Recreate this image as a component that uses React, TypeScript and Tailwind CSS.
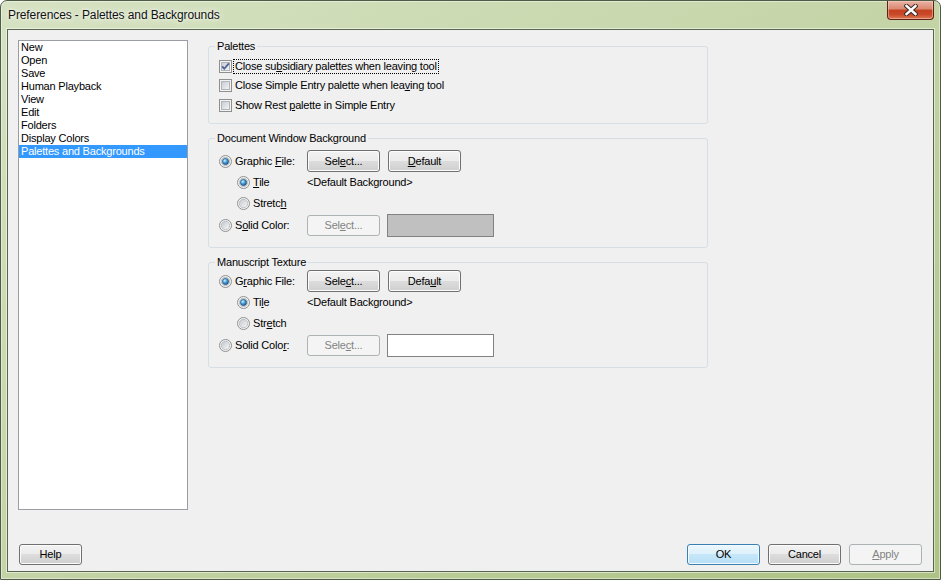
import React from "react";

const ITEMS = [
  "New",
  "Open",
  "Save",
  "Human Playback",
  "View",
  "Edit",
  "Folders",
  "Display Colors",
  "Palettes and Backgrounds",
];

// Underlines the mnemonic letter at index i
function Mn({ t, i }: { t: string; i?: number }) {
  if (i === undefined) return <>{t}</>;
  return (
    <>
      {t.slice(0, i)}
      <u className="underline underline-offset-[1px]">{t[i]}</u>
      {t.slice(i + 1)}
    </>
  );
}

function CheckBox({ checked }: { checked?: boolean }) {
  return (
    <svg width="13" height="13" viewBox="0 0 13 13" className="shrink-0">
      <defs>
        <linearGradient id="cbg" x1="0" y1="0" x2="1" y2="1">
          <stop offset="0" stopColor="#c6cbd1" />
          <stop offset="1" stopColor="#f6f6f6" />
        </linearGradient>
      </defs>
      <rect x="0.5" y="0.5" width="12" height="12" fill="#f4f4f4" stroke="#8e8f8f" />
      <rect x="2.5" y="2.5" width="8" height="8" fill="url(#cbg)" stroke="#b0b5ba" />
      {checked && (
        <path d="M3.2 6.4 L5.3 8.8 L9.9 3.4" fill="none" stroke="#4a5f97" strokeWidth="1.7" />
      )}
    </svg>
  );
}

function Radio({ on }: { on?: boolean }) {
  return (
    <svg width="13" height="13" viewBox="0 0 13 13" className="shrink-0">
      <defs>
        <linearGradient id="rin" x1="0" y1="0" x2="1" y2="1">
          <stop offset="0" stopColor="#c3c8ce" />
          <stop offset="1" stopColor="#f7f7f7" />
        </linearGradient>
        <radialGradient id="rdot" cx="0.38" cy="0.35" r="0.7">
          <stop offset="0" stopColor="#d2f0ff" />
          <stop offset="0.45" stopColor="#4ea6de" />
          <stop offset="1" stopColor="#174f86" />
        </radialGradient>
      </defs>
      <circle cx="6.5" cy="6.5" r="6" fill="#f4f4f4" stroke="#8e8f8f" />
      <circle cx="6.5" cy="6.5" r="4.2" fill="url(#rin)" stroke="#b4b9be" strokeWidth="0.8" />
      {on && <circle cx="6.5" cy="6.5" r="3.1" fill="url(#rdot)" stroke="#1d4e7e" strokeWidth="0.6" />}
    </svg>
  );
}

type BtnProps = {
  children: React.ReactNode;
  size?: string;
  disabled?: boolean;
  primary?: boolean;
  className?: string;
};

function Btn({ children, size = "w-[73px] h-[22px]", disabled, primary, className = "" }: BtnProps) {
  const look = disabled
    ? "border-[#adb2b5] bg-[#f4f4f4] text-[#838383]"
    : primary
    ? "border-[#3c7fb1] bg-[linear-gradient(#ecf7fd,#dcf0fb_50%,#c7e7f9_50%,#b6dff6)] shadow-[inset_0_0_0_1px_#f4fbff]"
    : "border-[#707070] bg-[linear-gradient(#f2f2f2,#ebebeb_50%,#dddddd_50%,#cfcfcf)] shadow-[inset_0_0_0_1px_#fcfcfc]";
  return (
    <div
      className={`${size} ${look} ${className} shrink-0 border rounded-[3px] flex items-center justify-center leading-[13px]`}
    >
      {children}
    </div>
  );
}

function Group({ title, className = "", children }: { title: string; className?: string; children: React.ReactNode }) {
  return (
    <fieldset className={`w-[500px] border border-[#d5dfe5] rounded-[3px] ${className}`}>
      <legend className="ml-[6px] px-[2px] leading-[13px]">{title}</legend>
      {children}
    </fieldset>
  );
}

function CheckRow({ text, i, checked, focus, h }: { text: string; i: number; checked?: boolean; focus?: boolean; h: string }) {
  return (
    <div className={`flex items-center ${h}`}>
      <CheckBox checked={checked} />
      <span
        className={`ml-[1px] px-[1px] border leading-[13px] ${focus ? "border-dotted border-black" : "border-transparent"}`}
      >
        <Mn t={text} i={i} />
      </span>
    </div>
  );
}

function BackgroundRows({ m, swatch }: { m: number[]; swatch: string }) {
  // m: mnemonic indexes for [graphic, select, default, tile, stretch, solid]
  return (
    <>
      <div className="flex items-center h-[22px]">
        <div className="flex items-center w-[88px]">
          <Radio on />
          <span className="ml-[3px]">
            <Mn t="Graphic File:" i={m[0]} />
          </span>
        </div>
        <Btn>
          <Mn t="Select..." i={m[1]} />
        </Btn>
        <Btn className="ml-[8px]">
          <Mn t="Default" i={m[2]} />
        </Btn>
      </div>
      <div className="flex items-center h-[21px]">
        <div className="flex items-center w-[88px] pl-[18px]">
          <Radio on />
          <span className="ml-[3px]">
            <Mn t="Tile" i={m[3]} />
          </span>
        </div>
        <span>&lt;Default Background&gt;</span>
      </div>
      <div className="flex items-center h-[20px]">
        <div className="flex items-center w-[88px] pl-[18px]">
          <Radio />
          <span className="ml-[3px]">
            <Mn t="Stretch" i={m[4]} />
          </span>
        </div>
      </div>
      <div className="flex items-center h-[25px]">
        <div className="flex items-center w-[88px]">
          <Radio />
          <span className="ml-[3px]">
            <Mn t="Solid Color:" i={m[5]} />
          </span>
        </div>
        <Btn disabled size="w-[73px] h-[21px]">
          <Mn t="Select..." i={m[1]} />
        </Btn>
        <div className={`ml-[7px] w-[107px] h-[23px] border border-[#828282] ${swatch}`} />
      </div>
    </>
  );
}

export default function App(): React.ReactElement {
  return (
    <div className="w-[941px] h-[580px] bg-white font-['Liberation_Sans',Arial,sans-serif] text-[11px] tracking-[-0.2px] text-black">
      <div className="w-full h-full flex flex-col rounded-t-[7px] border border-[#4f5c45] bg-linear-to-br from-[#d6e2c2] via-[#c4d4a6] to-[#adc283] shadow-[inset_0_0_0_1px_rgba(255,255,255,0.45)]">
        {/* Title bar */}
        <div className="h-[28px] flex items-start justify-between pl-[7px] pr-[6px]">
          <div className="pt-[6px] text-[12px] leading-[16px] tracking-[-0.1px] text-[#111] [text-shadow:0_0_8px_#fff,0_0_3px_#fff]">
            Preferences - Palettes and Backgrounds
          </div>
          <div className="w-[47px] h-[19px] rounded-b-[4px] border border-t-0 border-[#5c2418] bg-[linear-gradient(#e9b2a4,#da8770_45%,#c4411f_50%,#c9492a_75%,#e07a52)] shadow-[inset_0_0_0_1px_rgba(255,220,210,0.45)] flex items-center justify-center">
            <svg width="14" height="12" viewBox="0 0 14 12">
              <path d="M2.5 2 L11.5 10 M11.5 2 L2.5 10" stroke="#3b2a26" strokeWidth="4.4" strokeLinecap="square" />
              <path d="M2.5 2 L11.5 10 M11.5 2 L2.5 10" stroke="#ffffff" strokeWidth="2.4" strokeLinecap="square" />
            </svg>
          </div>
        </div>

        {/* Client area */}
        <div className="flex-1 mx-[6px] mb-[7px] border border-[#59664f] bg-[#f0f0f0] flex flex-col shadow-[0_0_0_1px_rgba(255,255,255,0.5)]">
          <div className="flex items-start gap-[20px] pl-[10px] pt-[10px]">
            {/* Category list */}
            <div className="w-[170px] h-[470px] border border-[#9a9da3] bg-white flex flex-col">
              {ITEMS.map((it, idx) => (
                <div
                  key={it}
                  className={`h-[13px] leading-[13px] pl-[2px] ${
                    idx === ITEMS.length - 1 ? "bg-[#3399ff] text-white" : ""
                  }`}
                >
                  {it}
                </div>
              ))}
            </div>

            {/* Settings */}
            <div className="flex flex-col">
              <Group title="Palettes">
                <div className="flex flex-col pl-[10px] pt-[3px] pb-[8px]">
                  <CheckRow text="Close subsidiary palettes when leaving tool" i={8} checked focus h="h-[20px]" />
                  <CheckRow text="Close Simple Entry palette when leaving tool" i={35} h="h-[19px]" />
                  <CheckRow text="Show Rest palette in Simple Entry" i={10} h="h-[20px]" />
                </div>
              </Group>

              <Group title="Document Window Background" className="mt-[8px]">
                <div className="flex flex-col pl-[10px] pt-[5px] pb-[9px]">
                  <BackgroundRows m={[8, 3, 0, 0, 6, 1]} swatch="bg-[#c0c0c0]" />
                </div>
              </Group>

              <Group title="Manuscript Texture" className="mt-[8px]">
                <div className="flex flex-col pl-[10px] pt-[1px] pb-[9px]">
                  <BackgroundRows m={[1, 4, 4, 2, 3, 10]} swatch="bg-white" />
                </div>
              </Group>
            </div>
          </div>

          {/* Footer buttons */}
          <div className="mt-auto flex items-center px-[11px] pb-[6px]">
            <Btn size="w-[63px] h-[21px]">Help</Btn>
            <div className="flex-1" />
            <div className="flex gap-[8px]">
              <Btn primary size="w-[73px] h-[21px]">OK</Btn>
              <Btn size="w-[73px] h-[21px]">Cancel</Btn>
              <Btn disabled size="w-[73px] h-[21px]">
                <Mn t="Apply" i={0} />
              </Btn>
            </div>
          </div>
        </div>
      </div>
    </div>
  );
}
